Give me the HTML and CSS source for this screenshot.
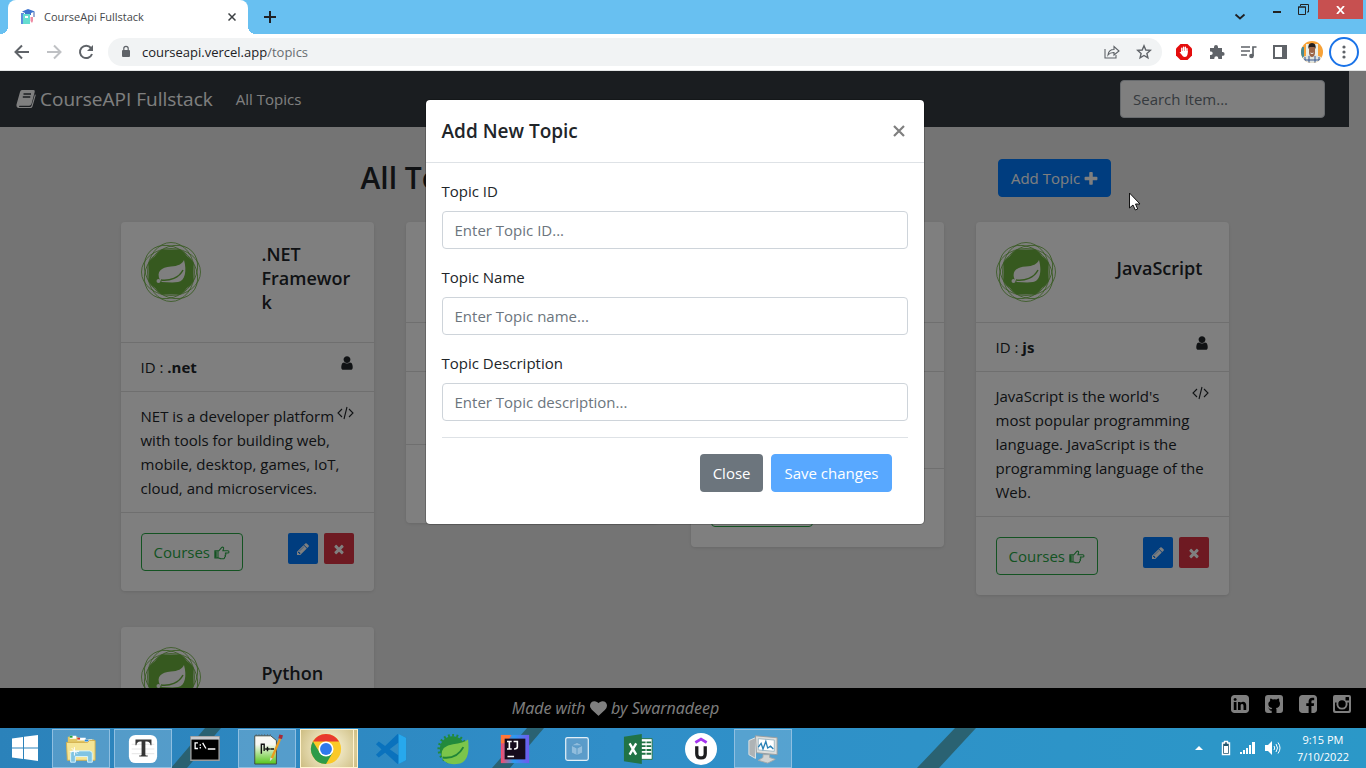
FILE: index.html
```html
<!DOCTYPE html>
<html lang="en">
<head>
<meta charset="utf-8">
<meta name="viewport" content="width=device-width, initial-scale=1">
<title>CourseApi Fullstack</title>
<link rel="stylesheet" href="styles.css">
</head>
<body>
<svg class="sprite" aria-hidden="true">
  <symbol id="times" viewBox="0 0 1792 1792"><path d="M1490 1322q0 40-28 68l-136 136q-28 28-68 28t-68-28l-294-294-294 294q-28 28-68 28t-68-28l-136-136q-28-28-28-68t28-68l294-294-294-294q-28-28-28-68t28-68l136-136q28-28 68-28t68 28l294 294 294-294q28-28 68-28t68 28l136 136q28 28 28 68t-28 68l-294 294 294 294q28 28 28 68z"/></symbol>
  <symbol id="plus" viewBox="128 128 1536 1536"><path d="M1600 736v192q0 40-28 68t-68 28h-416v416q0 40-28 68t-68 28h-192q-40 0-68-28t-28-68v-416h-416q-40 0-68-28t-28-68v-192q0-40 28-68t68-28h416v-416q0-40 28-68t68-28h192q40 0 68 28t28 68v416h416q40 0 68 28t28 68z"/></symbol>
  <symbol id="pencil" viewBox="0 0 1792 1792"><path d="M491 1536l91-91-235-235-91 91v107h128v128h107zm523-928q0-22-22-22-10 0-17 7l-542 542q-7 7-7 17 0 22 22 22 10 0 17-7l542-542q7-7 7-17zm-54-192l416 416-832 832h-416v-416zm683 96q0 53-37 90l-166 166-416-416 166-165q36-38 90-38 53 0 91 38l235 234q37 39 37 91z"/></symbol>
  <symbol id="user" viewBox="128 0 1536 1792"><path d="M1536 1399q0 109-62.500 187t-150.500 78h-854q-88 0-150.500-78t-62.500-187q0-85 8.500-160.500t31.500-152 58.500-131 94-89 134.500-34.500q131 128 313 128t313-128q76 0 134.500 34.500t94 89 58.500 131 31.500 152 8.500 160.500zm-256-887q0 159-112.500 271.500t-271.500 112.500-271.500-112.500-112.500-271.500 112.500-271.500 271.500-112.500 271.500 112.500 112.500 271.500z"/></symbol>
  <symbol id="heart" viewBox="0 0 1792 1792"><path d="M896 1664q-26 0-44-18l-624-602q-10-8-27.500-26t-55.500-65.500-68-97.500-53.500-121-23.500-138q0-220 127-344t351-124q62 0 126.500 21.500t120 58 95.500 68.500 76 68q36-36 76-68t95.500-68.500 120-58 126.500-21.500q224 0 351 124t127 344q0 221-229 450l-623 600q-18 18-44 18z"/></symbol>
  <symbol id="code" viewBox="0 0 17 16"><path d="M5 4 1 8l4 4M12 4l4 4-4 4M10 2 7 14" fill="none" stroke="currentColor" stroke-width="1.100"/></symbol>
  <symbol id="hand" viewBox="0 0 18 16"><path d="M1 5.500h4.500l3-3.500c1-1.200 2.700-.3 2.300 1L10 5.500h5.500c1.800 0 1.800 2.600 0 2.600h-3.200c1.500.4 1.300 2.200.2 2.400.8.700.4 2-.6 2.200.2 1.100-.5 1.800-1.700 1.800H8c-1.400 0-2.200-1-3.500-1H1zM4.500 5.500v8" fill="none" stroke="currentColor" stroke-width="1.200"/><path d="M1 6h2v7H1z"/></symbol>
  <symbol id="spring" viewBox="0 0 60 60"><g fill="none" stroke="#6db33f" stroke-width=".8"><ellipse cx="30" cy="30" rx="29.500" ry="23.500"/><ellipse cx="30" cy="30" rx="23.500" ry="29.500"/><ellipse cx="30" cy="30" rx="29.500" ry="23.500" transform="rotate(45 30 30)"/><ellipse cx="30" cy="30" rx="23.500" ry="29.500" transform="rotate(45 30 30)"/></g><path fill="#6db33f" d="M21 7.500h18q3.500 1.500 7 6.500 5 3.500 6.500 7v18q-1.500 3.500-6.500 7-3.500 5-7 6.500H21q-3.500-1.500-7-6.500-5-3.500-6.500-7V21q1.500-3.500 6.500-7 3.500-5 7-6.500z"/><path fill="#fff" d="M43 18c3 11 1 21-6 22-6 1-11 0-16 0l-2-2c-4-8 1-13 11-13.500 7-.3 11-2.500 13-6.500z"/><path fill="none" stroke="#6db33f" stroke-width="1.500" d="M20 38c9 1 18-2 22-10"/><circle cx="17.500" cy="39" r="2" fill="#fff"/></symbol>
</svg>

<div class="window">
  <header class="titlebar">
    <div class="tab">
      <svg class="favicon" viewBox="0 0 16 16"><path fill="#3b74cf" d="m8 0 7 2.500-4 1.500V6H5V4L2 2.500z"/><path fill="#5c8ede" d="M1 4h3v11H1z"/><path fill="#65ddd0" d="M3 5h7v10H3z"/><path fill="#fff" d="M5 7h3v2H5z"/><path fill="#ef8ca4" d="M10.500 8h2.500v4l-1 2-1.500-2z"/><path fill="#375eac" d="M13.500 3h1v5h-1z"/></svg>
      <span class="tab-title">CourseApi Fullstack</span>
      <button class="plain" aria-label="Close tab"><svg width="8" height="8" viewBox="0 0 8 8"><path d="m.5.500 7 7M7.500.500l-7 7" stroke="#3c4043" stroke-width="1.500"/></svg></button>
    </div>
    <button class="plain new-tab" aria-label="New tab"><svg width="12" height="12" viewBox="0 0 12 12"><path d="M6 0v12M0 6h12" stroke="#202124" stroke-width="2"/></svg></button>
    <div class="window-controls">
      <button class="plain search-tabs" aria-label="Search tabs"><svg width="12" height="8" viewBox="0 0 12 8"><path d="m1.500 1.500 4.500 4 4.500-4" fill="none" stroke="#202124" stroke-width="1.800"/></svg></button>
      <button class="plain minimise" aria-label="Minimize"><svg width="10" height="13"><path d="M1 11h8v2H1z" fill="#222"/></svg></button>
      <button class="plain restore" aria-label="Restore"><svg width="11" height="11" viewBox="0 0 11 11"><path d="M.5 3h7v7.500h-7zM0 3h8M2.500 2V.5h8V8H9" fill="none" stroke="#222"/></svg></button>
      <button class="plain close-window" aria-label="Close window"><svg width="9" height="8" viewBox="0 0 9 8"><path d="m1 0 7 8M8 0 1 8" stroke="#fff" stroke-width="1.800"/></svg></button>
    </div>
  </header>

  <div class="toolbar">
    <div class="history">
      <button class="plain" aria-label="Back"><svg width="16" height="16" viewBox="0 0 16 16"><path d="M15 8H2M8 1.500 1.500 8 8 14.500" fill="none" stroke="#5f6368" stroke-width="2"/></svg></button>
      <button class="plain" aria-label="Forward"><svg width="16" height="16" viewBox="0 0 16 16"><path d="M1 8h13M8 1.500 14.500 8 8 14.500" fill="none" stroke="#bfc1c4" stroke-width="2"/></svg></button>
      <button class="plain" aria-label="Reload"><svg width="16" height="16" viewBox="0 0 16 16"><path d="M13 4A6.200 6.200 0 1 0 14 10" fill="none" stroke="#5f6368" stroke-width="2"/><path d="M15 1v6H9z" fill="#5f6368"/></svg></button>
    </div>
    <div class="address">
      <svg width="10" height="14" viewBox="0 0 10 14"><path d="M2 5h6a1 1 0 0 1 1 1v5a1 1 0 0 1-1 1H2a1 1 0 0 1-1-1V6a1 1 0 0 1 1-1z" fill="#5f6368"/><path d="M2.800 5V3.500a2.200 2.200 0 0 1 4.400 0V5" fill="none" stroke="#5f6368" stroke-width="1.200"/></svg>
      <div class="url">courseapi.vercel.app<span>/topics</span></div>
      <button class="plain" aria-label="Share"><svg width="16" height="16" viewBox="0 0 16 16"><path d="M1 5v9h11v-3M4 11c.5-4 3-5.500 6-5.500V2.500L15 7l-5 4V8.500C7.500 8.400 5.500 9 4 11z" fill="none" stroke="#5f6368" stroke-width="1.100"/></svg></button>
      <button class="plain" aria-label="Bookmark"><svg width="16" height="16" viewBox="0 0 16 16"><path d="m8 1.800 1.800 4.200 4.500.4-3.400 3 1 4.400L8 11.500l-3.900 2.300 1-4.400-3.400-3 4.500-.4z" fill="none" stroke="#5f6368" stroke-width="1.400"/></svg></button>
    </div>
    <div class="extensions">
      <button class="plain" aria-label="Ad blocker"><svg width="18" height="18" viewBox="0 0 18 18"><path d="M5.500 1h7L17 5.500v7L12.500 17h-7L1 12.500v-7z" fill="#e40d0d"/><path d="M6.800 5.200v4M8.600 4.200V9M10.400 4.200V9M12 5.800V9" stroke="#fff" stroke-width="1.400" stroke-linecap="round"/><path d="M6.100 8h6.600v2.500Q12.200 14 9.800 14 8 14 6.500 11.500L4.500 9.300q.7-.8 1.600 0z" fill="#fff"/></svg></button>
      <button class="plain" aria-label="Extensions"><svg width="16" height="16" viewBox="0 0 16 16"><path d="M1 4h4V3a2 2 0 0 1 4 0v1h4v4h.7a1.900 1.900 0 0 1 0 3.800H13V15H9.300v-.8a2 2 0 0 0-4 0v.8H1v-4h1a1.700 1.700 0 0 0 0-3.400H1z" fill="#5f6368"/></svg></button>
      <button class="plain" aria-label="Media"><svg width="16" height="16" viewBox="0 0 16 16"><path d="M0 3h9M0 7h9M0 11h6M15.500 3H12v9" fill="none" stroke="#5f6368" stroke-width="1.700"/><circle cx="10.500" cy="12" r="2.300" fill="#5f6368"/></svg></button>
      <button class="plain" aria-label="Side panel"><svg width="14" height="14" viewBox="0 0 14 14"><path d="M1 1h12v12H1z" fill="none" stroke="#5f6368" stroke-width="2"/><path d="M9 1h4v12H9z" fill="#5f6368"/></svg></button>
      <button class="plain" aria-label="Profile"><svg width="22" height="22" viewBox="0 0 22 22"><defs><clipPath id="face"><circle cx="11" cy="11" r="11"/></clipPath></defs><g clip-path="url(#face)"><path fill="#f7a238" d="M0 0h22v22H0z"/><path fill="#e9efe9" d="M5 3h12v12H5z"/><path fill="#468a94" d="M0 6h3v12H0z"/><path fill="#dfe4e0" d="M2 16q9-5 18 0v6H2z"/><path d="M4 16v6M8 15v7M14 15v7M18 16v6M2 19h18" stroke="#38578d"/><path fill="#9b6547" d="M8 5h6v7q-.5 4-3 4t-3-4z"/><path fill="#251f1e" d="M7.500 8q-1-6 3.500-6t3.500 6l-1-2h-5z"/><path d="M9.500 12q1.500 1.200 3 0" stroke="#eee" fill="none"/></g></svg></button>
      <button class="plain menu-button" aria-label="Menu"><svg width="4" height="16" viewBox="0 0 4 16"><g fill="#5f6368"><circle cx="2" cy="3" r="1.600"/><circle cx="2" cy="8" r="1.600"/><circle cx="2" cy="13" r="1.600"/></g></svg></button>
    </div>
  </div>

  <div class="viewport">
    <div class="page">
      <nav class="navbar">
        <a class="brand" href="#"><svg width="20" height="20" viewBox="0 0 20 20"><path d="M6 1h11.500q1.800 0 1.200 2L15.500 15q-.6 1.800-2.300 1.800H3.500q-.9.500-.2 1.200h10.500q1.300 0 1.700-1.200L19 5l.7 1.200L16.500 17.500Q16 19 14.500 19H3q-3-.2-2.500-3.500L4 3q.5-1.800 2-2z" fill="currentColor"/><path d="M7.500 5h7.500M6.800 8h7.500" stroke="#343a40" stroke-width="1.300"/></svg>CourseAPI Fullstack</a>
        <a class="nav-link" href="#">All Topics</a>
        <input class="control search" type="search" placeholder="Search Item..." aria-label="Search Item">
      </nav>
      <main class="container">
        <div class="heading-row">
          <h1>All Topics</h1>
          <button class="btn btn-primary">Add Topic <svg class="plus"><use href="#plus"/></svg></button>
        </div>
        <div class="cards">
          <article class="card">
            <div class="card-head"><svg class="logo"><use href="#spring"/></svg><h2>.NET Framework</h2></div>
            <div class="card-row card-id"><span>ID : <b>.net</b></span><svg class="user"><use href="#user"/></svg></div>
            <div class="card-row"><svg class="code"><use href="#code"/></svg>NET is a developer platform with tools for building web, mobile, desktop, games, IoT, cloud, and microservices.</div>
            <div class="card-foot"><button class="btn btn-outline">Courses <svg class="hand"><use href="#hand"/></svg></button><span class="actions"><button class="btn-small btn-primary" aria-label="Edit"><svg><use href="#pencil"/></svg></button><button class="btn-small btn-danger" aria-label="Delete"><svg><use href="#times"/></svg></button></span></div>
          </article>
          <article class="card">
            <div class="card-head"></div>
            <div class="card-row"></div>
            <div class="card-row lines-2"></div>
            <div class="card-foot"></div>
          </article>
          <article class="card">
            <div class="card-head"></div>
            <div class="card-row"></div>
            <div class="card-row lines-3"></div>
            <div class="card-foot"><button class="btn btn-outline">Courses <svg class="hand"><use href="#hand"/></svg></button></div>
          </article>
          <article class="card">
            <div class="card-head"><svg class="logo"><use href="#spring"/></svg><h2>JavaScript</h2></div>
            <div class="card-row card-id"><span>ID : <b>js</b></span><svg class="user"><use href="#user"/></svg></div>
            <div class="card-row"><svg class="code"><use href="#code"/></svg>JavaScript is the world's most popular programming language. JavaScript is the programming language of the Web.</div>
            <div class="card-foot"><button class="btn btn-outline">Courses <svg class="hand"><use href="#hand"/></svg></button><span class="actions"><button class="btn-small btn-primary" aria-label="Edit"><svg><use href="#pencil"/></svg></button><button class="btn-small btn-danger" aria-label="Delete"><svg><use href="#times"/></svg></button></span></div>
          </article>
          <article class="card">
            <div class="card-head"><svg class="logo"><use href="#spring"/></svg><h2>Python</h2></div>
          </article>
        </div>
      </main>
    </div>
    <footer class="site-footer">
      <p>Made with <svg class="heart"><use href="#heart"/></svg> by Swarnadeep</p>
      <div class="social">
        <a href="#" aria-label="LinkedIn"><svg viewBox="128 128 1536 1536"><path d="M365 1414h231v-694h-231v694zm246-908q-1-52-36-86t-93-34-94.500 34-36.500 86q0 51 35.500 85.500t92.500 34.500h1q59 0 95-34.500t36-85.500zm585 908h231v-398q0-154-73-233t-193-79q-136 0-209 117h2v-101h-231q3 66 0 694h231v-388q0-38 7-56 15-35 45-59.500t74-24.500q116 0 116 157v371zm468-998v960q0 119-84.500 203.500t-203.500 84.500h-960q-119 0-203.500-84.500t-84.500-203.500v-960q0-119 84.500-203.500t203.500-84.500h960q119 0 203.500 84.500t84.500 203.500z"/></svg></a>
        <a href="#" aria-label="GitHub"><svg viewBox="0 0 18 18"><path fill-rule="evenodd" d="M3 0h12q3 0 3 3v12q0 3-3 3h-3.500v-3.500q0-1-.6-1.500c2.400-.2 4.100-1.500 4.100-4.300q0-1.500-.9-2.600.3-1.200-.2-2.500-1 0-2.500 1-1.600-.5-3.600 0-1.400-1-2.400-1-.6 1.300-.2 2.500Q3.300 7.200 3.300 8.700c0 2.800 1.600 4.100 4 4.300q-.5.500-.6 1.100-1.700.7-2.500-.8-.5-.9-1.300-.8 1.200 1 1.500 2 .6 1.400 2.300 1.200V18H3q-3 0-3-3V3q0-3 3-3z"/></svg></a>
        <a href="#" aria-label="Facebook"><svg viewBox="128 128 1536 1536"><path d="M1376 128q119 0 203.500 84.500t84.500 203.500v960q0 119-84.500 203.500t-203.500 84.500h-188v-595h199l30-232h-229v-148q0-56 23.500-84t91.500-28l122-1v-207q-63-9-178-9-136 0-217.500 80t-81.500 226v171h-200v232h200v595h-532q-119 0-203.500-84.500t-84.500-203.500v-960q0-119 84.500-203.500t203.500-84.500h960z"/></svg></a>
        <a href="#" aria-label="Instagram"><svg viewBox="0 0 18 18"><path fill-rule="evenodd" d="M2 0h14q2 0 2 2v14q0 2-2 2H2q-2 0-2-2V2q0-2 2-2zM13 2q-.5 0-.5.500v2.500q0 .5.500.5h2.500q.5 0 .5-.5V2.500q0-.5-.5-.5zM2 7.500V15q0 1 1 1h12q1 0 1-1V7.500h-1.600A5.600 5.600 0 1 1 3.600 7.500zM9 5.300a3.700 3.700 0 1 0 0 7.400 3.700 3.700 0 0 0 0-7.400z"/></svg></a>
      </div>
    </footer>
    <div class="backdrop">
      <section class="modal" role="dialog" aria-labelledby="modal-title">
        <div class="modal-head"><h2 id="modal-title">Add New Topic</h2><button class="plain modal-close" aria-label="Close dialog"><svg width="12" height="12" viewBox="0 0 12 12"><path d="m1 1 10 10M11 1 1 11" stroke="#7f7f7f" stroke-width="2.200"/></svg></button></div>
        <form class="modal-body">
          <div class="field"><label for="topic-id">Topic ID</label><input class="control" id="topic-id" type="text" placeholder="Enter Topic ID..."></div>
          <div class="field"><label for="topic-name">Topic Name</label><input class="control" id="topic-name" type="text" placeholder="Enter Topic name..."></div>
          <div class="field"><label for="topic-desc">Topic Description</label><input class="control" id="topic-desc" type="text" placeholder="Enter Topic description..."></div>
          <div class="modal-foot"><button class="btn btn-secondary" type="button">Close</button><button class="btn btn-primary" type="submit" disabled>Save changes</button></div>
        </form>
      </section>
    </div>
  </div>

  <footer class="taskbar">
    <svg class="wallpaper" viewBox="0 0 1366 40" preserveAspectRatio="none"><g fill="#2a5d68" opacity=".9"><path d="M205 0h16l-34 40h-16zM527 0h17l-34 40h-18zM955 0h21l-37 40h-22z"/></g></svg>
    <button class="plain start" aria-label="Start"><svg width="28" height="28" viewBox="0 0 28 28"><path fill="#fff" d="M1 4.500 12 3v10.500H1zM13 2.800 27 1v12.500H13zM1 14.500h11V25L1 23.500zM13 14.500h14V27l-14-2z"/></svg></button>
    <div class="apps">
      <button class="app running" aria-label="File Explorer"><svg viewBox="0 0 34 34"><path fill="#e2c765" d="M3 4h10l2 3h16v8H3z"/><path fill="#fff" d="M5 3h7v3H5zM13 5h9v3h-9zM21 7h8v3h-8z"/><path fill="#1fa33d" d="M5 3h3v2H5z"/><path fill="#d73a26" d="M13 5h3v2h-3z"/><path fill="#2488dc" d="M21 7h4v2h-4z"/><path fill="#f5e596" stroke="#d2af4e" d="M1.500 10H24l2-2h6v21H2.500z"/><path fill="#80c4e3" stroke="#d9f5ff" d="M6 31v-9q0-3 3-3h17q3 0 3 3v9h-5v-6H11v6z"/><path stroke="#fff" d="M10 15v9M5 19.500h10M7 16l6 6"/></svg></button>
      <button class="app running" aria-label="Typora"><svg viewBox="0 0 34 34"><rect x="2" y="2" width="30" height="30" rx="7" fill="#fff"/><path stroke="#e3e3e3" d="M5 12h24M5 17h24M5 22h24"/><path fill="#353535" d="M9 7h17v6h-1q-.5-4-4-4h-1.500v14q0 1 2.500 1v1h-9v-1q2.500 0 2.500-1V9H14q-3.500 0-4 4H9z"/></svg></button>
      <button class="app" aria-label="Command Prompt"><svg viewBox="0 0 34 34"><path fill="#000" stroke="#9a9a9a" stroke-width="1.500" d="M2 4h30v25H2z"/><path fill="#c9ccd0" d="M2 4h30v3H2z"/><path fill="none" stroke="#fff" stroke-width="1.400" d="M9.500 10.500H6.500v6h3M12 12v1.500M12 15v1.500M14.500 10.500l3.500 6M20 17h8"/></svg></button>
      <button class="app running" aria-label="Notepad++"><svg viewBox="0 0 34 34"><defs><linearGradient id="npp" x2="0" y2="1"><stop offset=".3" stop-color="#f8f8f3"/><stop offset="1" stop-color="#55c51b"/></linearGradient></defs><path fill="url(#npp)" stroke="#3e4740" d="M4 3h17l6 5v25H4z"/><path stroke="#555" stroke-dasharray="1 2" d="M5 2h17"/><path fill="none" stroke="#111" stroke-width="1.500" d="M11 22V12h3v7M15 17h5M17.500 14.500v5M20.500 17h4"/><path stroke="#e99c20" stroke-width="2.500" d="m31 6-9 21"/><path stroke="#a72b37" stroke-width="4" d="m32 2-1 4"/><path fill="#ddd" d="m20.500 26-.5 4 3-3z"/></svg></button>
      <button class="app running active" aria-label="Chrome"><svg viewBox="0 0 34 34"><circle cx="17" cy="17" r="16" fill="#fbc927"/><path fill="#e8392f" d="M3.140 9A16 16 0 0 1 30.860 9H17z"/><path fill="#2d9b49" d="M3.140 9A16 16 0 0 0 17 33l7-12-13 1z"/><circle cx="17" cy="17" r="8" fill="#fff"/><circle cx="17" cy="17" r="6.300" fill="#2f79ec"/></svg></button>
      <button class="app" aria-label="Visual Studio Code"><svg viewBox="0 0 34 34"><path fill="#0a72bd" d="m24 1 9 4v24l-9 4L1 12l3-3 21 15V10L4 26l-3-3z"/><path fill="#27a8ed" d="m25 1 8 4v24l-8 4z"/></svg></button>
      <button class="app" aria-label="Spring Tools"><svg viewBox="0 0 34 34"><circle cx="16.500" cy="17" r="13.500" fill="#228a3c"/><circle cx="16.500" cy="17" r="14.500" fill="none" stroke="#228a3c" stroke-width="3" stroke-dasharray="2 2.500"/><path fill="#7bc54a" d="M33 7q3 25-12 26T5 24q-1-10 12-12 11-1 16-5z"/><path fill="none" stroke="#218537" stroke-width="2" d="M6 26q15 2 22-11"/></svg></button>
      <button class="app" aria-label="IntelliJ IDEA"><svg viewBox="0 0 34 34"><defs><linearGradient id="idea"><stop stop-color="#fe4867"/><stop offset=".45" stop-color="#2b9df0"/><stop offset="1" stop-color="#7058ee"/></linearGradient></defs><path fill="url(#idea)" d="M2 2h30v30H2z"/><path fill="#ff7739" d="M2 2h11l-5 9H2z"/><path fill="#160b1d" d="M6 6h22v22H6z"/><path fill="none" stroke="#fff" stroke-width="1.700" d="M8.500 9h5M11 9v8M8.500 17h5M15.500 9h4v6q0 2-3.500 2M9 25h7"/></svg></button>
      <button class="app" aria-label="VirtualBox"><svg viewBox="0 0 34 34"><rect x="5" y="5" width="24" height="24" rx="2" fill="#5b9cca" stroke="#e2f0f8" stroke-width="1.300"/><path fill="#91bddd" stroke="#5797c4" d="m17 10 6 3v8l-6 3-6-3v-8zM11 13l6 3 6-3M17 16v8"/></svg></button>
      <button class="app" aria-label="Excel"><svg viewBox="0 0 34 34"><path fill="#fff" stroke="#217346" d="M18 6h13v22H18z"/><path stroke="#217346" stroke-width="2" stroke-dasharray="5 1" d="M19 10h11M19 14h11M19 18h11M19 22h11"/><path fill="#217346" d="m1 4 19-3v32L1 30z"/><path stroke="#fff" stroke-width="2.500" d="m7 11 7 12M14 11 7 23"/></svg></button>
      <button class="app" aria-label="Udemy"><svg viewBox="0 0 34 34"><circle cx="17" cy="17" r="17" fill="#fff"/><path fill="none" stroke="#a435f0" stroke-width="3" d="m11 10 6-3.500 6 3.500"/><path fill="none" stroke="#1c1d1f" stroke-width="3.500" d="M12.500 14v8q0 4.500 4.500 4.500t4.500-4.500v-8"/></svg></button>
      <button class="app running" aria-label="Monitor"><svg viewBox="0 0 34 34"><path fill="#aeb3b5" stroke="#e2e4e4" d="m2 8 7-3v22l-7-4z"/><path fill="#dcdedc" stroke="#9b9e9f" d="m9 3 23 2v18L10 21z"/><path fill="#fff" stroke="#9db7c4" d="m12 6 17 1.500v12L12 18z"/><path fill="none" stroke="#277fb5" stroke-width="1.400" d="m12 15 3-4 2 6 3-8 2 7 3-2 3 3"/><path fill="#d2d4d3" stroke="#a8abaa" d="M17 23v3l-5 3 10 3 8-4-6-2v-3z"/></svg></button>
    </div>
    <div class="tray">
      <svg class="up" width="10" height="6" viewBox="0 0 10 6"><path d="m1 5 4-4 4 4z" fill="#fff"/></svg>
      <svg width="10" height="16" viewBox="0 0 10 16"><path d="M1.500 3h2V1.500h3V3h2v11.500h-7z" fill="#24566f" stroke="#fff" stroke-width="1.400"/><path d="M3 6h4v7H3z" fill="#fff"/></svg>
      <svg width="16" height="12" viewBox="0 0 16 12"><path d="M0 10h2v2H0zM3 8h2v4H3zM6 6h2v6H6zM9 3h2v9H9zM12 0h3v12h-3z" fill="#fff"/></svg>
      <svg width="16" height="14" viewBox="0 0 16 14"><path d="M0 4h3l4-4v14l-4-4H0z" fill="#fff"/><path d="M9 5q1.500 2 0 4M11 3q3 4 0 8M13 1.500q4 5.500 0 11" fill="none" stroke="#fff"/></svg>
      <time class="clock"><span>9:15 PM</span><span>7/10/2022</span></time>
    </div>
  </footer>
</div>
<svg class="cursor" width="13" height="20" viewBox="0 0 13 20"><path d="M.5 1v15L4 13l2.300 5 2.400-1-2.200-5H11z" fill="#fff" stroke="#111"/></svg>
</body>
</html>
```
FILE: styles.css
```css
* { box-sizing: border-box; }
body {
  margin: 0;
  font-family: "Open Sans", "Noto Sans", sans-serif;
  font-size: 15px;
  line-height: 24px;
  color: #212529;
}
h1, h2, p { margin: 0; font-weight: 600; }
button, input { font: inherit; }
svg { flex: none; fill: currentColor; }
.sprite { position: absolute; width: 0; height: 0; }
.plain {
  display: flex;
  align-items: center;
  justify-content: center;
  padding: 0;
  border: 0;
  background: none;
}
.window { display: flex; flex-direction: column; height: 100vh; overflow: hidden; }

/* Browser frame */
.titlebar { display: flex; height: 34px; background: #68c0f1; padding-left: 8px; }
.tab {
  position: relative;
  display: flex;
  align-items: center;
  width: 240px;
  padding: 0 12px;
  border-radius: 8px 8px 0 0;
  background: #fff;
}
.tab::before, .tab::after {
  content: "";
  position: absolute;
  bottom: 0;
  width: 8px;
  height: 8px;
}
.tab::before { left: -8px; background: radial-gradient(circle at 0 0, transparent 8px, #fff 8px); }
.tab::after { right: -8px; background: radial-gradient(circle at 100% 0, transparent 8px, #fff 8px); }
.favicon { width: 16px; height: 16px; }
.tab-title { flex: 1; margin-left: 8px; font-size: 11px; color: #45474a; }
.new-tab { margin-left: 16px; }
.window-controls { display: flex; align-items: flex-start; margin-left: auto; }
.search-tabs { margin: 13px 26px 0 0; }
.minimise { margin-right: 16px; }
.restore { margin: 4px 9px 0 0; }
.close-window { width: 45px; height: 19px; margin-right: 3px; background: #c75050; }
.toolbar {
  display: flex;
  align-items: center;
  height: 37px;
  border-bottom: 1px solid #e3e5e5;
  background: #fff;
}
.history { display: flex; gap: 16px; padding: 0 14px; }
.address {
  display: flex;
  flex: 1;
  align-items: center;
  gap: 16px;
  height: 28px;
  padding: 0 10px 0 13px;
  border-radius: 14px;
  background: #f1f3f4;
}
.url { flex: 1; margin-left: -5px; font-size: 13px; color: #202124; }
.url span { color: #686c70; }
.extensions { display: flex; align-items: center; gap: 16px; padding: 0 7px 0 13px; }
.extensions .plain:nth-child(5) { margin: 0 -10px 0 -2px; }
.menu-button { width: 30px; height: 30px; border: 2px solid #1a73e8; border-radius: 50%; }

/* Page */
.viewport { position: relative; display: flex; flex: 1; flex-direction: column; min-height: 0; }
.page { flex: 1; min-height: 0; overflow: hidden; padding-right: 17px; background: #e8e8e8; }
.navbar { display: flex; align-items: center; height: 56px; padding: 0 24px 0 16px; background: #343a40; }
.navbar a { color: #fff; text-decoration: none; }
.brand { display: flex; align-items: center; gap: 4px; font-size: 19px; }
.nav-link { margin-left: 23px; }
.search { width: 205px; margin-left: auto; }
.container { max-width: 1140px; margin: 0 auto; }
.heading-row {
  display: grid;
  grid-template-columns: 2fr 1fr;
  align-items: center;
  justify-items: center;
  padding-top: 32px;
}
h1 { width: 248px; font-size: 30px; line-height: 38px; }
.cards {
  display: grid;
  grid-template-columns: repeat(4, 1fr);
  align-items: start;
  gap: 32px;
  padding: 25px 16px;
}
.card { border-radius: 4px; background: #fff; box-shadow: 0 1px 3px rgba(0, 0, 0, .1); }
.card-head {
  display: flex;
  align-items: center;
  justify-content: space-between;
  min-height: 100px;
  padding: 20px;
}
.card-head h2 { width: 92px; margin-bottom: 8px; font-size: 18px; line-height: 24px; overflow-wrap: anywhere; }
.logo { align-self: flex-start; width: 60px; height: 60px; }
.card-row { min-height: 49px; padding: 12px 20px; border-top: 1px solid #dfdfdf; }
.card-id { display: flex; justify-content: space-between; }
.lines-2 { min-height: 73px; }
.lines-3 { min-height: 97px; }
.user { width: 14px; height: 16px; }
.code { float: right; width: 17px; height: 18px; }
.card-foot {
  display: flex;
  align-items: flex-start;
  justify-content: space-between;
  min-height: 79px;
  padding: 20px;
  border-top: 1px solid #dfdfdf;
}
.actions { display: flex; gap: 6px; }

.btn {
  height: 38px;
  padding: 0 12px;
  border: 1px solid transparent;
  border-radius: 4px;
  color: #fff;
}
.btn svg { vertical-align: -2px; }
.btn-primary { border-color: #007bff; background: #007bff; }
.btn-primary:disabled { opacity: .65; }
.btn-secondary { background: #6c757d; }
.btn-danger { background: #dc3545; }
.btn-outline { border-color: #28a745; color: #28a745; background: none; }
.btn-small {
  display: flex;
  align-items: center;
  justify-content: center;
  width: 30px;
  height: 31px;
  padding: 0;
  border: 0;
  border-radius: 2px;
  color: #fff;
}
.btn-small svg { width: 14px; height: 14px; }
.plus { width: 14px; height: 14px; }
.btn .hand { width: 16px; height: 16px; vertical-align: -3px; }
.control {
  display: block;
  height: 38px;
  padding: 0 12px;
  border: 1px solid #ced4da;
  border-radius: 4px;
  background: #fff;
}
.control::placeholder { color: #6c757d; opacity: 1; }

.site-footer { display: flex; align-items: center; height: 40px; padding-right: 15px; color: #fff; background: #000; }
.site-footer p { flex: 1; font-size: 16px; font-style: italic; font-weight: 400; text-align: center; }
.heart { width: 17px; height: 17px; vertical-align: -3px; }
.social { display: flex; gap: 16px; padding-bottom: 9px; }
.social a { display: flex; color: #fff; }
.social svg { width: 18px; height: 18px; }

/* Dialog */
.backdrop {
  position: absolute;
  inset: 0;
  padding: 28px 17px 0 0;
  background: rgba(0, 0, 0, .5);
}
.modal {
  max-width: 500px;
  margin: 0 auto;
  border: 1px solid rgba(0, 0, 0, .2);
  border-radius: 5px;
  background: #fff;
  background-clip: padding-box;
}
.modal-head {
  display: flex;
  align-items: center;
  justify-content: space-between;
  padding: 16px;
  border-bottom: 1px solid #dee2e6;
}
.modal-head h2 { font-size: 19px; line-height: 30px; }
.modal-close { width: 18px; }
.modal-body { padding: 16px; }
.field { margin-bottom: 16px; }
.field label { display: block; margin-bottom: 8px; }
.field .control { width: 100%; }
.modal-foot { display: flex; justify-content: flex-end; gap: 8px; padding: 16px; border-top: 1px solid #dee2e6; }

/* Desktop taskbar */
.taskbar {
  position: relative;
  display: flex;
  height: 40px;
  background: linear-gradient(90deg, #2b82ba, #308ec8 45%, #2b98c8);
}
.wallpaper { position: absolute; width: 100%; height: 100%; }
.start { position: relative; width: 50px; margin-right: 2px; }
.apps { position: relative; display: flex; gap: 4px; }
.app {
  display: flex;
  align-items: center;
  justify-content: center;
  width: 58px;
  height: 39px;
  margin-top: 1px;
  padding: 0;
  border: 1px solid transparent;
  background: none;
}
.app svg { width: 32px; height: 32px; }
.running { border-color: #8fbfe1; background: rgba(146, 190, 220, .4); }
.active {
  padding-right: 6px;
  border: 1px solid #fff3cf;
  background: linear-gradient(90deg, transparent 52px, #fff3cf 52px 53px, transparent 53px), radial-gradient(circle, #fffbe3, #cdbd82);
}
.tray { position: relative; display: flex; align-items: center; gap: 9px; margin-left: auto; padding-right: 17px; color: #fff; }
.up { margin-right: 8px; }
.clock { display: flex; flex-direction: column; margin-left: 7px; font-size: 11px; line-height: 17px; text-align: center; }
.cursor { position: absolute; left: 1129px; top: 192px; }
```
